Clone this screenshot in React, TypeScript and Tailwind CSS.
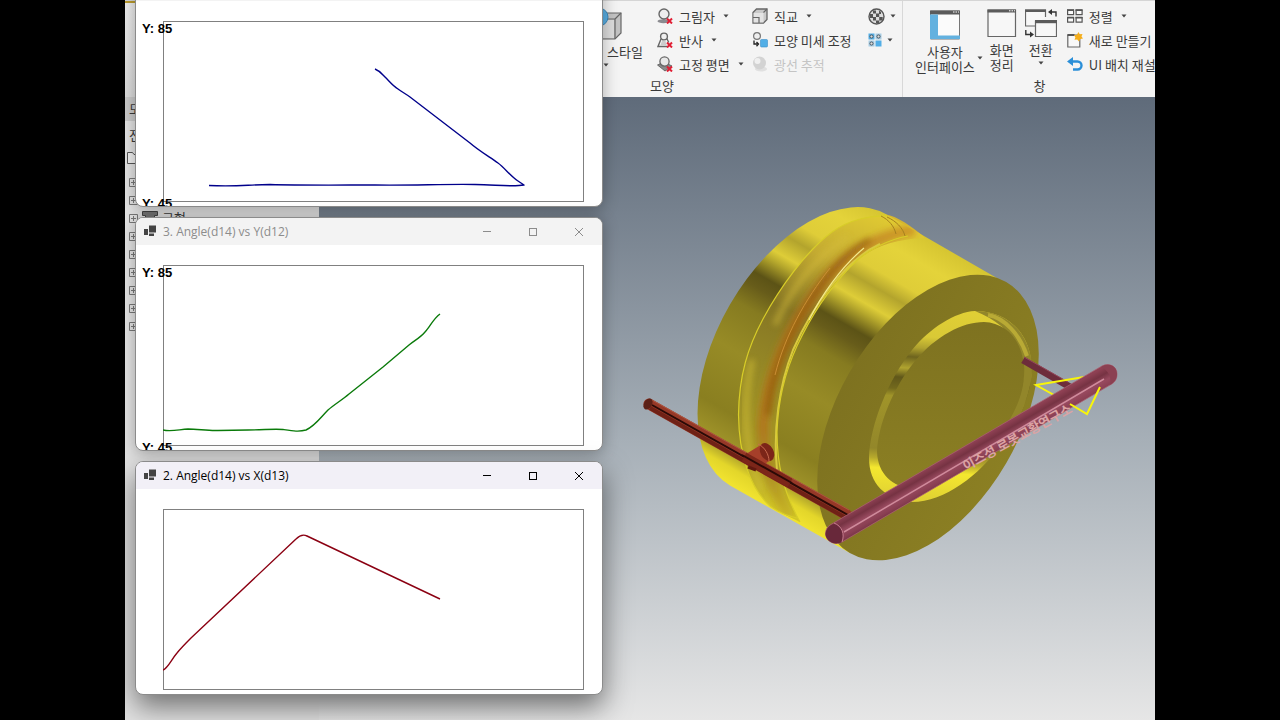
import React from "react";

interface ChartWindowProps {
  title: string;
  active?: boolean;
  showRange?: boolean;
  color: string;
  line: string;
  className: string;
}

const ribbonFont = "font-['Noto_Sans_CJK_KR','Noto_Sans',sans-serif]";

function Caret({ className = "" }: { className?: string }) {
  return (
    <svg viewBox="0 0 6 4" className={`h-1 w-1.5 shrink-0 ${className}`} aria-hidden="true">
      <path d="M0.5 0.5h5L3 3.5z" fill="#444" />
    </svg>
  );
}

function RedCross() {
  return <path d="M10 10.5l5 5M15 10.5l-5 5" stroke="#e01f35" strokeWidth="2" />;
}

function ShadowIcon() {
  return (
    <svg viewBox="0 0 16 16" className="size-4 shrink-0" aria-hidden="true">
      <ellipse cx="6.5" cy="13.2" rx="6" ry="2" fill="#8b8b90" />
      <circle cx="7" cy="6" r="5" fill="#ededed" stroke="#666" strokeWidth="1.4" />
      <RedCross />
    </svg>
  );
}

function ReflectIcon() {
  return (
    <svg viewBox="0 0 16 16" className="size-4 shrink-0" aria-hidden="true">
      <path d="M4.2 6.5L1 14.5h9M9.8 6.5l2 4" fill="none" stroke="#666" strokeWidth="1.4" />
      <path d="M5 9l-1.5 4h6L8.5 9z" fill="#ccc" />
      <circle cx="7" cy="4.5" r="3.4" fill="#f0f0f0" stroke="#666" strokeWidth="1.4" />
      <RedCross />
    </svg>
  );
}

function GroundIcon() {
  return (
    <svg viewBox="0 0 16 16" className="size-4 shrink-0" aria-hidden="true">
      <path d="M0.5 9L7 6l8 4-7 5z" fill="#8a8a8a" stroke="#555" strokeWidth="0.8" />
      <circle cx="7.5" cy="5.5" r="4.6" fill="#e8e8e8" stroke="#666" strokeWidth="1.3" />
      <RedCross />
    </svg>
  );
}

function OrthoIcon() {
  return (
    <svg viewBox="0 0 16 16" className="size-4 shrink-0" aria-hidden="true">
      <path d="M1 4.5L4.500 1H15v10.500L11.500 15H1z" fill="#c9c9c9" stroke="#666" strokeWidth="1.3" />
      <path d="M1.600 5h9.900v9.500H1.600z" fill="#e3e3e3" />
      <path d="M1 9.500h6V15M11.500 4.500L15 1" fill="none" stroke="#666" strokeWidth="1.2" />
    </svg>
  );
}

function RefineIcon() {
  return (
    <svg viewBox="0 0 16 16" className="size-4 shrink-0" aria-hidden="true">
      <circle cx="5" cy="4" r="3.4" fill="#eee" stroke="#777" strokeWidth="1.2" />
      <path d="M2 8.500v3.500h3.500M4.500 10l2 2-2 2.200" fill="none" stroke="#222" strokeWidth="1.3" />
      <rect x="8.500" y="7.500" width="7" height="7.500" rx="1" fill="#52aee6" stroke="#3a8fc8" strokeWidth="0.6" />
    </svg>
  );
}

function RayIcon() {
  return (
    <svg viewBox="0 0 16 16" className="size-4 shrink-0" aria-hidden="true">
      <ellipse cx="9" cy="13" rx="6" ry="2.500" fill="#e0e0e0" />
      <circle cx="7.500" cy="7" r="6.500" fill="#d3d3d3" />
      <circle cx="5.500" cy="5" r="3" fill="#f0f0f0" />
    </svg>
  );
}

function TextureIcon() {
  return (
    <svg viewBox="0 0 17 17" className="size-[17px] shrink-0" aria-hidden="true">
      <circle cx="8.500" cy="8.500" r="7.500" fill="#ddd" stroke="#555" strokeWidth="1.4" />
      <path
        d="M5 2.500h3v3H5zM11 2.500l2 1.500v2h-2zM2 6h3v4H2zM8 5.500h3.200v3.500H8zM5 9h3v3.500H5zM11.200 9h3.500v3.500h-3.500zM8 12.500h3.200V15H8z"
        fill="#555"
      />
    </svg>
  );
}

function GridIcon() {
  return (
    <svg viewBox="0 0 14 14" className="size-[14px] shrink-0" aria-hidden="true">
      <path d="M0.500 0.500h6v6h-6zM7.500 7.500h6v6h-6z" fill="#52aee6" />
      <path d="M7.500 0.500h6v6h-6zM0.500 7.500h6v6h-6z" fill="#a9cde4" />
      <g fill="#ddd" stroke="#47545e" strokeWidth="1">
        <circle cx="3.500" cy="3.500" r="1.6" />
        <circle cx="10.500" cy="3.500" r="1.6" />
        <circle cx="3.500" cy="10.500" r="1.6" />
      </g>
    </svg>
  );
}

function UserInterfaceIcon() {
  return (
    <svg viewBox="0 0 30 30" className="size-[30px]" aria-hidden="true">
      <path d="M0.500 1h29v28h-29z" fill="#fbfbfb" stroke="#777" />
      <path d="M0 0.500h30v4H0z" fill="#5b5b5b" />
      <path d="M0 4.500h8v21h22V29H0z" fill="#63b1df" />
      <path d="M23 2h1.500M25.500 2H27M28 2h1" stroke="#fff" />
    </svg>
  );
}

function CleanScreenIcon() {
  return (
    <svg viewBox="0 0 30 30" className="size-[30px]" aria-hidden="true">
      <path d="M1 2h27.500v26.500H1z" fill="#f7f7f7" stroke="#666" strokeWidth="1.2" />
      <path d="M0.500 1.500h28.500V4.500H0.500z" fill="#5b5b5b" />
      <path d="M22 2.800h1.500M24.500 2.800H26M27 2.800h1" stroke="#fff" />
    </svg>
  );
}

function SwitchIcon() {
  return (
    <svg viewBox="0 0 32 30" className="h-[30px] w-8" aria-hidden="true">
      <path d="M20.500 9V2H0.500v16H10" fill="#f7f7f7" stroke="#666" strokeWidth="1.2" />
      <path d="M0 1.500h21V4H0z" fill="#5b5b5b" />
      <path d="M10.500 13h21v15.500h-21z" fill="#f7f7f7" stroke="#666" strokeWidth="1.2" />
      <path d="M10 12h22v3.200H10z" fill="#5b5b5b" />
      <path d="M31 8.500V4h-6M0.800 22v4.500H7" fill="none" stroke="#333" strokeWidth="1.4" />
      <path d="M23 4l4-3v6zM9 26.500l-4-3v6z" fill="#333" />
    </svg>
  );
}

function ArrangeIcon() {
  return (
    <svg viewBox="0 0 16 14" className="h-[14px] w-4 shrink-0" aria-hidden="true">
      <path
        d="M0.600 1h6v4.600h-6zM9.100 1h6v4.600h-6zM0.600 8.500h6v4.600h-6zM9.100 8.500h6v4.600h-6z"
        fill="#fafafa"
        stroke="#555"
        strokeWidth="1.2"
      />
      <path d="M0 1.200h7M8.500 1.200h7M0 8.700h7M8.500 8.700h7" stroke="#555" strokeWidth="1.8" />
    </svg>
  );
}

function NewWindowIcon() {
  return (
    <svg viewBox="0 0 16 16" className="size-4 shrink-0" aria-hidden="true">
      <path d="M0.800 3h12v12h-12z" fill="#f8f8f8" stroke="#666" strokeWidth="1.2" />
      <path d="M0.500 3h7" stroke="#555" strokeWidth="2" />
      <path d="M11.500 0l1.200 2.300L15.500 2l-1 2.500 1.500 2-2.700.6-1.300 2.400-1.800-2-2.700.2.900-2.500-1.400-2 2.900-.5z" fill="#f5ae1b" />
    </svg>
  );
}

function UndoIcon() {
  return (
    <svg viewBox="0 0 16 14" className="h-[14px] w-4 shrink-0" aria-hidden="true">
      <path d="M4 4.500h6.500a4 4 0 0 1 0 8H6" fill="none" stroke="#2b8fd8" strokeWidth="2.4" />
      <path d="M0 4.500L6 0v9z" fill="#2b8fd8" />
    </svg>
  );
}

function StyleIcon() {
  return (
    <svg viewBox="0 0 34 32" className="h-8 w-[34px]" aria-hidden="true">
      <path d="M0 10l7-5h18v20l-6 6H0z" fill="#c4c4c4" stroke="#666" strokeWidth="1.2" />
      <path d="M0 11h19v20M19 11l6-6" fill="none" stroke="#666" strokeWidth="1.2" />
      <path d="M1 12h17v18H1z" fill="#dcdcdc" />
      <circle cx="3" cy="9" r="9" fill="#58aee3" stroke="#3a87b8" />
    </svg>
  );
}

interface ToolProps {
  icon: React.ReactNode;
  label?: string;
  menu?: boolean;
  disabled?: boolean;
}

function Tool({ icon, label, menu, disabled }: ToolProps) {
  return (
    <button
      type="button"
      disabled={disabled}
      aria-label={label ? undefined : "옵션"}
      className="flex h-6 items-center gap-1.5 whitespace-nowrap text-[13px] text-[#3a3a3a] disabled:text-[#c4c4c4]"
    >
      {icon}
      {label && <span>{label}</span>}
      {menu && <Caret className={label ? "ml-0.5" : "-ml-px"} />}
    </button>
  );
}

function Ribbon() {
  return (
    <header
      className={`flex h-[97px] shrink-0 overflow-hidden border-t border-[#d5d5d5] bg-[#f4f4f4] leading-[15px] text-[#3a3a3a] ${ribbonFont}`}
    >
      <div className="w-[297px] shrink-0 border-t-2 border-[#b99a2c] bg-linear-to-b from-[#ececec] to-[#dadada]" />
      <section className="flex w-[481px] shrink-0 flex-col border-r border-[#d8d8d8]">
        <div className="flex justify-end pt-[3px]">
          <button type="button" className="mr-3.5 flex w-[60px] flex-col items-center pt-1 text-[13px]">
            <StyleIcon />
            <span className="mt-1 self-end">스타일</span>
            <Caret className="mt-1 mr-3.5" />
          </button>
          <div className="w-[95px]">
            <Tool icon={<ShadowIcon />} label="그림자" menu />
            <Tool icon={<ReflectIcon />} label="반사" menu />
            <Tool icon={<GroundIcon />} label="고정 평면" menu />
          </div>
          <div className="w-[116px]">
            <Tool icon={<OrthoIcon />} label="직교" menu />
            <Tool icon={<RefineIcon />} label="모양 미세 조정" />
            <Tool icon={<RayIcon />} label="광선 추적" disabled />
          </div>
          <div className="w-[34px]">
            <Tool icon={<TextureIcon />} menu />
            <Tool icon={<GridIcon />} menu />
          </div>
        </div>
        <h2 className="mt-auto pb-1 text-center text-[13px]">모양</h2>
      </section>
      <section className="flex w-[273px] shrink-0 flex-col">
        <div className="flex pt-[3px] pl-3">
          <button type="button" className="flex items-center gap-0.5 pt-1 text-[13px]">
            <span className="flex flex-col items-center">
              <UserInterfaceIcon />
              <span className="mt-1">사용자</span>
              <span>인터페이스</span>
            </span>
            <Caret className="mt-8" />
          </button>
          <button type="button" className="ml-1 flex w-[30px] flex-col items-center pt-1 text-[13px]">
            <CleanScreenIcon />
            <span className="mt-1">화면</span>
            <span>정리</span>
          </button>
          <button type="button" className="ml-2 flex w-8 flex-col items-center pt-1 text-[13px]">
            <SwitchIcon />
            <span className="mt-1">전환</span>
            <Caret className="mt-1" />
          </button>
          <div className="ml-2.5">
            <Tool icon={<ArrangeIcon />} label="정렬" menu />
            <Tool icon={<NewWindowIcon />} label="새로 만들기" />
            <Tool icon={<UndoIcon />} label="UI 배치 재설정" />
          </div>
        </div>
        <h2 className="mt-auto pb-1 text-center text-[13px]">창</h2>
      </section>
    </header>
  );
}

const treeRows = 9;

function ModelBrowser() {
  return (
    <aside
      className={`w-[194px] shrink-0 overflow-hidden bg-[#e2e2e2] text-[13px] leading-4 text-[#3a3a3a] ${ribbonFont}`}
    >
      <div className="flex h-6 items-center bg-[#c9c9c9] pl-1">모델</div>
      <div className="flex h-7 items-center pl-1">전체</div>
      <svg viewBox="0 0 16 14" className="mt-0.5 ml-0.5 h-[14px] w-4" aria-hidden="true">
        <path d="M0.500 12.500V1.500h5l1.500 2h8v9z" fill="#eee" stroke="#555" />
      </svg>
      <ul className="mt-2">
        {Array.from({ length: treeRows }, (_, i) => (
          <li key={i} className="flex h-[18px] items-center gap-1 pl-1">
            <svg viewBox="0 0 9 9" className="size-[9px]" aria-hidden="true">
              <path d="M0.500 0.500h8v8h-8zM2 4.500h5M4.500 2v5" fill="none" stroke="#777" />
            </svg>
            {i === 2 && (
              <>
                <svg viewBox="0 0 16 14" className="h-[14px] w-4" aria-hidden="true">
                  <path d="M0.500 0.500h15v4h-3v9h-9v-9h-3z" fill="#777" stroke="#444" />
                </svg>
                <span>구형</span>
              </>
            )}
          </li>
        ))}
      </ul>
    </aside>
  );
}

const hull =
  "M730 485.500A156.400 90.600 -60 0 1 886.700 214.500L1002 281L850 553Z";
const grooveLeft =
  "M888 216C873 215 850 219 832 232C806 251 779 289 763 319C748 347 739 375 738.500 415C739 455 750 488 770 506C778 512 788 516 797 518";
const grooveRight =
  "M908 236C890 239 866 250 850 267C829 289 810 318 797 346C785 372 778 402 777 432C777 464 783 491 800 522";
const groove =
  "M888 216C873 215 850 219 832 232C806 251 779 289 763 319C748 347 739 375 738.500 415C739 455 750 488 770 506C778 512 788 516 800 522C783 491 777 464 777 432C778 402 785 372 797 346C810 318 829 289 850 267C866 250 890 239 925 238L905 219Z";
const recessOuter =
  "M975 311C1005 311 1028 330 1031.500 362C1034 390 1020 420 1000 446C980 474 945 502 912 502C885 500 869 483 869 458C870 425 888 380 912 350C930 328 955 312 975 311Z";
const recessInner =
  "M984 322C1008 323 1022 342 1024 366C1026 395 1012 420 992 444C974 466 942 487 914 489C892 487 878 474 877 452C878 425 893 388 915 361C936 336 962 322 984 322Z";

function Model() {
  return (
    <svg
      viewBox="319 97 836 623"
      preserveAspectRatio="xMidYMid slice"
      className="block size-full"
      role="img"
      aria-label="Cam assembly"
    >
      <defs>
        <linearGradient id="side" gradientUnits="userSpaceOnUse" x1="886.700" y1="214.500" x2="730.300" y2="485.500">
          <stop offset="0" stopColor="#d6c531" />
          <stop offset=".08" stopColor="#e4d33a" />
          <stop offset=".17" stopColor="#dfcd38" />
          <stop offset=".22" stopColor="#b3a42d" />
          <stop offset=".28" stopColor="#decd38" />
          <stop offset=".31" stopColor="#b5a72c" />
          <stop offset=".37" stopColor="#5c5316" />
          <stop offset=".41" stopColor="#675c1a" />
          <stop offset=".48" stopColor="#867b20" />
          <stop offset=".62" stopColor="#978b26" />
          <stop offset=".8" stopColor="#8a7f20" />
          <stop offset=".9" stopColor="#a1952a" />
          <stop offset=".95" stopColor="#e3d62a" />
          <stop offset="1" stopColor="#f2e430" />
        </linearGradient>
        <linearGradient id="groove" gradientUnits="userSpaceOnUse" x1="900" y1="225" x2="775" y2="520">
          <stop offset="0" stopColor="#dfc932" />
          <stop offset=".18" stopColor="#c4ab32" />
          <stop offset=".38" stopColor="#857524" />
          <stop offset=".6" stopColor="#978a26" />
          <stop offset=".85" stopColor="#a89a26" />
          <stop offset="1" stopColor="#ddd028" />
        </linearGradient>
        <linearGradient id="ember" gradientUnits="userSpaceOnUse" x1="900" y1="225" x2="775" y2="520">
          <stop offset="0" stopColor="#cf9a28" />
          <stop offset=".3" stopColor="#b07720" />
          <stop offset=".75" stopColor="#b0781e" />
          <stop offset="1" stopColor="#b0901e" stopOpacity=".2" />
        </linearGradient>
        <linearGradient id="face" x1="0" y1="0" x2="0" y2="1">
          <stop offset="0" stopColor="#7e7220" />
          <stop offset="1" stopColor="#8b7f23" />
        </linearGradient>
        <linearGradient id="recess" gradientUnits="userSpaceOnUse" x1="940" y1="311" x2="925" y2="502">
          <stop offset="0" stopColor="#e0cf35" />
          <stop offset=".14" stopColor="#d9c936" />
          <stop offset=".2" stopColor="#b0a22f" />
          <stop offset=".25" stopColor="#6e641e" />
          <stop offset=".31" stopColor="#b0a32f" />
          <stop offset=".36" stopColor="#60571a" />
          <stop offset=".42" stopColor="#73691d" />
          <stop offset=".46" stopColor="#a09429" />
          <stop offset=".74" stopColor="#93872a" />
          <stop offset=".79" stopColor="#b8aa2c" />
          <stop offset=".84" stopColor="#f4e72f" />
          <stop offset="1" stopColor="#dfd033" />
        </linearGradient>
        <linearGradient id="rod" gradientUnits="userSpaceOnUse" x1="961" y1="449" x2="973" y2="470">
          <stop offset="0" stopColor="#8e4053" />
          <stop offset=".25" stopColor="#763343" />
          <stop offset=".5" stopColor="#97495e" />
          <stop offset=".75" stopColor="#8a3f53" />
          <stop offset="1" stopColor="#6e3040" />
        </linearGradient>
        <clipPath id="hullClip">
          <path d={hull} />
        </clipPath>
        <clipPath id="grooveClip">
          <path d={groove} />
        </clipPath>
        <filter id="soft" x="-20%" y="-20%" width="140%" height="140%">
          <feGaussianBlur stdDeviation="3" />
        </filter>
      </defs>

      <path d={hull} fill="url(#side)" />
      <path d="M886 214.500C896 216 912 226 925 238L905 238Z" fill="#d5b52f" />
      <g clipPath="url(#hullClip)">
        <path d={groove} fill="url(#groove)" />
        <g clipPath="url(#grooveClip)" fill="none">
          <path
            d="M915 230C880 234 848 253 825 280C793 320 768 369 763 425C763 465 774 495 790 518"
            stroke="url(#ember)"
            strokeWidth="11"
            filter="url(#soft)"
          />
          <path
            d="M870 240C845 252 822 280 802 314C783 347 770 382 768 415"
            stroke="#84500f"
            strokeWidth="4"
            opacity=".8"
            filter="url(#soft)"
          />
          <path d="M848 237C815 257 790 290 775 325" stroke="#d8c03e" strokeWidth="5" opacity=".6" filter="url(#soft)" />
          <path d="M752 360C743 400 743 450 762 490" stroke="#d2c038" strokeWidth="5" opacity=".7" filter="url(#soft)" />
          <path d="M830 268C805 300 785 335 775 375" stroke="#c98e34" strokeWidth="1" />
          <path d="M880 244C845 260 812 307 793 350C779 385 773 430 777 470" stroke="#d9c93f" strokeWidth="2" />
          <path d="M864 248C841 267 821 296 809 320" stroke="#f3e98e" strokeWidth="1.200" />
        </g>
        <path d={grooveLeft} fill="none" stroke="#d8cd28" strokeWidth="1.200" />
        <path d={grooveRight} fill="none" stroke="#d8cd28" strokeWidth="1.200" />
        <path d="M881 216C889 220 894 226 896 234M887 217C896 221 903 228 905 236" fill="none" stroke="#a5801f" strokeWidth="1" />
      </g>

      <ellipse cx="928" cy="417.500" rx="156.400" ry="90.600" transform="rotate(-60 928 417.500)" fill="url(#face)" />
      <path d={recessOuter} fill="url(#recess)" />
      <path d="M975 311C1005 311 1028 330 1031.500 362C1034 390 1020 420 1000 446L990 440C1012 415 1026 390 1024 366C1021 342 1003 322 975 311Z" fill="#92862a" />
      <path d="M988 315C1005 318 1020 335 1027 356" fill="none" stroke="#b9aa35" strokeWidth="4" />
      <path d={recessInner} fill="url(#face)" />

      <path d="M1023 360L1070 387" stroke="#6d2c3b" strokeWidth="7" />
      <path d="M1024 357L1068 382" stroke="#94475a" strokeWidth="1" />

      <path d="M649 404L847 515" stroke="#963827" strokeWidth="11" strokeLinecap="round" />
      <path d="M650 408L846 518" stroke="#6f2116" strokeWidth="4" />
      <path d="M652 405L848 515" stroke="#2a0a07" strokeWidth="2" />
      <path d="M652 400L849 510" stroke="#ad5540" strokeWidth="1" />
      <ellipse cx="648" cy="404" rx="4" ry="6" transform="rotate(30 648 404)" fill="#5c2016" />
      <path d="M752 461L765 453" stroke="#a63f2a" strokeWidth="18" />
      <ellipse cx="767" cy="452" rx="6.500" ry="9.500" transform="rotate(-28 767 452)" fill="#7c2518" />
      <path d="M758 444C765 447 769 455 769 461" fill="none" stroke="#c86a50" />
      <path d="M744 457L790 483" stroke="#7c2619" strokeWidth="10" />
      <path d="M742 455L792 483" stroke="#2a0a07" strokeWidth="2" />
      <path d="M748 467L756 470" stroke="#5f190f" strokeWidth="3" />

      <path d="M1084 377L1036 385L1054 395" fill="none" stroke="#f8f50a" strokeWidth="2" />
      <path
        d="M830 525L1102 366C1110 362 1117 367 1117 374C1117 380 1114 383 1110 385L842 542C834 546 826 541 825.500 534C825.500 530 827 527 830 525Z"
        fill="url(#rod)"
        stroke="#a85f70"
        strokeWidth="0.800"
      />
      <path d="M834 524C842 526 845 534 842 542C834 546 826 541 825.500 534C826 529 830 525 834 524Z" fill="#68283a" />
      <path d="M834 523C842 526 845 534 842 542" fill="none" stroke="#c77d8e" />
      <path d="M1101 367C1108 370 1112 377 1110 385C1117 381 1119 374 1115 368C1111 364 1106 364 1101 367Z" fill="#8b4052" />
      <path d="M844 532L1104 379" stroke="#d08b9c" strokeWidth="1.500" />
      <path d="M1070 404L1087 414L1100 387" fill="none" stroke="#f8f50a" strokeWidth="2" />
      <text
        transform="translate(966 471) rotate(-29)"
        fill="#dba3a4"
        className="font-['Noto_Sans_CJK_KR',sans-serif] text-[13px] font-bold"
      >
        이즈성 로봇교황연구소
      </text>
    </svg>
  );
}

function ChartWindow({ title, active = false, showRange = false, color, line, className }: ChartWindowProps) {
  return (
    <section
      className={`absolute left-2.5 w-[468px] overflow-hidden rounded-lg border border-[#8b8b8b] bg-white ${
        active ? "shadow-[0_12px_28px_0_rgba(0,0,0,0.5)]" : "shadow-[0_2px_16px_rgba(0,0,0,0.3)]"
      } ${className}`}
    >
      <div
        className={`flex h-[27px] items-center pl-2 text-xs ${
          active ? "bg-[#f2f0f7] text-black" : "bg-[#f3f3f3] text-[#8c8c8c]"
        }`}
      >
        <svg viewBox="0 0 12 12" className="mb-0.5 size-3" aria-hidden="true">
          <path d="M0 4h4v6H0zM5 0.500h7v7H5zM5 8.500h5V11H5z" fill="#444" />
        </svg>
        <h1 className="ml-[7px] font-['Open_Sans','Noto_Sans',sans-serif]">{title}</h1>
        <div className="ml-auto flex">
          <button type="button" aria-label="Minimize" className="flex h-[27px] w-[46px] items-center justify-center">
            <svg viewBox="0 0 10 10" className="size-2.5" fill="none" stroke="currentColor">
              <path d="M1 4.500h8" />
            </svg>
          </button>
          <button type="button" aria-label="Maximize" className="flex h-[27px] w-[46px] items-center justify-center">
            <svg viewBox="0 0 10 10" className="size-2.5" fill="none" stroke="currentColor">
              <rect x="1.500" y="1.500" width="7" height="7" />
            </svg>
          </button>
          <button type="button" aria-label="Close" className="flex h-[27px] w-[46px] items-center justify-center">
            <svg viewBox="0 0 10 10" className="size-2.5" fill="none" stroke="currentColor">
              <path d="M1 1l8 8M9 1l-8 8" />
            </svg>
          </button>
        </div>
      </div>
      <div className="relative pt-5 pr-[18px] pb-1 pl-[27px] font-['Liberation_Sans',sans-serif] text-[13px] leading-4 font-bold text-black">
        <svg viewBox="0 0 421 181" className="block h-[181px] w-full" fill="none" aria-hidden="true">
          <rect x="0.500" y="0.500" width="420" height="180" stroke="#808080" />
          <path d={line} stroke={color} strokeWidth="1.4" strokeLinejoin="round" />
        </svg>
        {showRange && (
          <>
            <span className="absolute top-5 left-1.5">Y: 85</span>
            <span className="absolute -bottom-1.5 left-1.5">Y: 45</span>
          </>
        )}
      </div>
    </section>
  );
}

const xyLine =
  "M212 48C217 50 219 53 222 56C227 61 230 65 235 68C239 71 243 73 247 76L307 122C315 129 325 135 335 142C342 147 348 156 355 160L361 164C350 166 335 164 312 163.500C280 163 250 164.500 212 164C180 164 140 164.500 107 163.500C85 163.500 75 166 46 164.500";
const angleYLine =
  "M0 165C8 167 16 164.500 25 164C35 164 45 166 55 165.500L85 165C100 165 112 163.500 120 164.500C130 166 136 167 143 165C152 161 158 152 165 145C172 139 179 135 186 129L220 102L246 80C252 75 257 73 262 67C267 62 270 54 277 49";
const angleXLine =
  "M0 161C5 159 8 151 14 144C18 139 23 134 28 129L133 30C137 26 140 25 144 27L277 90";

export default function App() {
  return (
    <main className="flex h-screen justify-center overflow-hidden bg-black">
      <div className="relative flex w-full max-w-[1030px] flex-col overflow-hidden">
        <Ribbon />
        <div className="flex min-h-0 flex-1">
          <ModelBrowser />
          <div className="min-w-0 flex-1 bg-linear-to-b from-[#5f6b7a] via-[#a6afb7] via-55% to-[#e6e6e6]">
            <Model />
          </div>
        </div>
        <ChartWindow
          title="1. X(d13) vs Y(d12)"
          showRange
          color="#00008b"
          line={xyLine}
          className="-top-[27px]"
        />
        <ChartWindow
          title="3. Angle(d14) vs Y(d12)"
          showRange
          color="#0a7a0a"
          line={angleYLine}
          className="top-[217px]"
        />
        <ChartWindow
          title="2. Angle(d14) vs X(d13)"
          active
          color="#8b0012"
          line={angleXLine}
          className="top-[461px]"
        />
      </div>
    </main>
  );
}
